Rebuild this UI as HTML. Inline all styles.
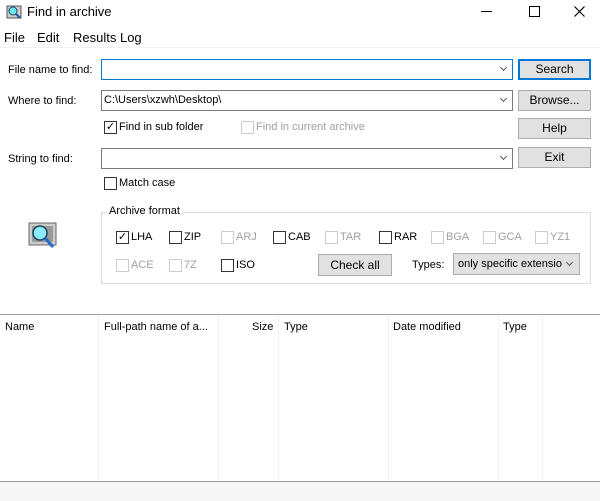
<!DOCTYPE html>
<html><head><style>
body{margin:0;width:600px;height:501px;background:#fff;font-family:"Liberation Sans",sans-serif;font-size:11px;color:#000;position:relative;overflow:hidden}
.a{position:absolute;white-space:nowrap}
.inp{position:absolute;border:1px solid #7a7a7a;background:#fff;box-sizing:border-box}
.chev{position:absolute;right:6px;top:5px;width:4px;height:4px;border-right:1px solid #555;border-bottom:1px solid #555;transform:rotate(45deg)}
.btn{position:absolute;background:#e1e1e1;border:1px solid #adadad;box-sizing:border-box;text-align:center;line-height:19px;font-size:12px}
.cb{position:absolute;width:13px;height:13px;border:1px solid #333;box-sizing:border-box;background:#fff}
.cb.d{border-color:#ccc}
.g{color:#a0a0a0}
.vl{position:absolute;top:315px;height:166px;width:1px;background:#f0f0f5}
</style></head><body>
<svg class="a" style="left:6px;top:5px" width="16" height="14"><rect x="1" y="1" width="14" height="12" fill="#ccc" stroke="#555"/><circle cx="7" cy="6" r="4" fill="#6ee" stroke="#246"/><line x1="10" y1="9" x2="14" y2="13" stroke="#25a" stroke-width="2"/></svg>
<div class="a" style="left:27px;top:4px;font-size:13px">Find in archive</div>
<div class="a" style="left:481px;top:11px;width:11px;height:1px;background:#000"></div>
<div class="a" style="left:529px;top:6px;width:9px;height:9px;border:1px solid #000"></div>
<svg class="a" style="left:574px;top:6px" width="11" height="11"><path d="M0.5 0.5L10.5 10.5M10.5 0.5L0.5 10.5" stroke="#000" stroke-width="1.2"/></svg>
<div class="a" style="left:4px;top:30px;font-size:13px">File</div>
<div class="a" style="left:37px;top:30px;font-size:13px">Edit</div>
<div class="a" style="left:73px;top:30px;font-size:13px">Results Log</div>
<div class="a" style="left:0;top:47px;width:600px;height:1px;background:#f0f0f0"></div>

<div class="a" style="left:8px;top:64px">File name to find:</div>
<div class="inp" style="left:101px;top:59px;width:412px;height:21px;border-color:#0078d7"><div class="chev"></div></div>
<div class="a" style="left:8px;top:95px">Where to find:</div>
<div class="inp" style="left:101px;top:90px;width:412px;height:21px"><span class="a" style="left:2px;top:3px">C:\Users\xzwh\Desktop\</span><div class="chev"></div></div>
<div class="cb" style="left:104px;top:121px;font-size:11px;line-height:11px;text-align:center">✓</div>
<div class="a" style="left:119px;top:121px">Find in sub folder</div>
<div class="cb d" style="left:241px;top:121px"></div>
<div class="a g" style="left:256px;top:121px">Find in current archive</div>
<div class="a" style="left:8px;top:153px">String to find:</div>
<div class="inp" style="left:101px;top:148px;width:412px;height:21px"><div class="chev"></div></div>
<div class="cb" style="left:104px;top:177px"></div>
<div class="a" style="left:119px;top:177px">Match case</div>

<div class="btn" style="left:518px;top:59px;width:73px;height:21px;border:2px solid #0078d7;line-height:17px">Search</div>
<div class="btn" style="left:518px;top:90px;width:73px;height:21px">Browse...</div>
<div class="btn" style="left:518px;top:118px;width:73px;height:21px">Help</div>
<div class="btn" style="left:518px;top:147px;width:73px;height:21px">Exit</div>

<svg class="a" style="left:27px;top:221px" width="32" height="30"><rect x="2" y="2" width="27" height="22" fill="#ccc" stroke="#666"/><rect x="5" y="5" width="21" height="16" fill="#999"/><circle cx="13" cy="12" r="7" fill="#8ef" stroke="#245" stroke-width="1.5"/><line x1="18" y1="17" x2="26" y2="26" stroke="#2368d0" stroke-width="3"/></svg>

<div class="a" style="left:101px;top:212px;width:490px;height:72px;border:1px solid #dcdcdc;box-sizing:border-box"></div>
<div class="a" style="left:107px;top:205px;background:#fff;padding:0 2px">Archive format</div>

<div class="cb" style="left:116px;top:231px;font-size:11px;line-height:11px;text-align:center">✓</div><div class="a" style="left:131px;top:231px">LHA</div>
<div class="cb" style="left:169px;top:231px"></div><div class="a" style="left:184px;top:231px">ZIP</div>
<div class="cb d" style="left:221px;top:231px"></div><div class="a g" style="left:236px;top:231px">ARJ</div>
<div class="cb" style="left:273px;top:231px"></div><div class="a" style="left:288px;top:231px">CAB</div>
<div class="cb d" style="left:325px;top:231px"></div><div class="a g" style="left:340px;top:231px">TAR</div>
<div class="cb" style="left:379px;top:231px"></div><div class="a" style="left:394px;top:231px">RAR</div>
<div class="cb d" style="left:431px;top:231px"></div><div class="a g" style="left:446px;top:231px">BGA</div>
<div class="cb d" style="left:483px;top:231px"></div><div class="a g" style="left:498px;top:231px">GCA</div>
<div class="cb d" style="left:535px;top:231px"></div><div class="a g" style="left:550px;top:231px">YZ1</div>
<div class="cb d" style="left:116px;top:259px"></div><div class="a g" style="left:131px;top:259px">ACE</div>
<div class="cb d" style="left:169px;top:259px"></div><div class="a g" style="left:184px;top:259px">7Z</div>
<div class="cb" style="left:221px;top:259px"></div><div class="a" style="left:236px;top:259px">ISO</div>
<div class="btn" style="left:318px;top:254px;width:74px;height:22px;line-height:20px">Check all</div>
<div class="a" style="left:412px;top:259px">Types:</div>
<div class="btn" style="left:453px;top:253px;width:127px;height:22px;text-align:left;padding-left:4px;line-height:20px;font-size:11px">only specific extensio<div class="chev" style="right:7px;top:6px"></div></div>

<div class="a" style="left:0;top:314px;width:600px;height:1px;background:#a0a0a0"></div>
<div class="vl" style="left:98px"></div><div class="vl" style="left:218px"></div><div class="vl" style="left:278px"></div><div class="vl" style="left:388px"></div><div class="vl" style="left:498px"></div><div class="vl" style="left:542px"></div>
<div class="a" style="left:5px;top:321px">Name</div>
<div class="a" style="left:104px;top:321px">Full-path name of a...</div>
<div class="a" style="left:252px;top:321px">Size</div>
<div class="a" style="left:284px;top:321px">Type</div>
<div class="a" style="left:393px;top:321px">Date modified</div>
<div class="a" style="left:503px;top:321px">Type</div>
<div class="a" style="left:0;top:481px;width:600px;height:1px;background:#999"></div>
<div class="a" style="left:0;top:482px;width:600px;height:19px;background:#f7f7f7"></div>
</body></html>
